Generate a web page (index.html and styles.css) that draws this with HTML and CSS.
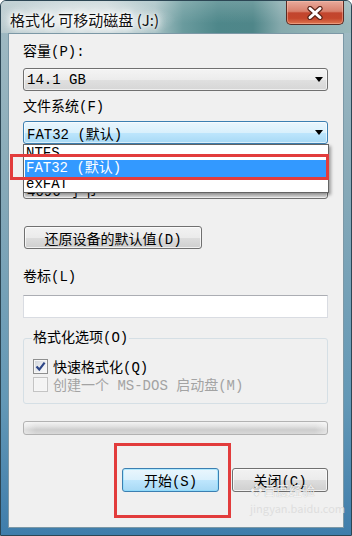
FILE: index.html
```html
<!DOCTYPE html>
<html lang="zh-CN">
<head>
    <meta charset="UTF-8">
    <meta name="viewport" content="width=device-width, initial-scale=1.0">
    <title>格式化 可移动磁盘 (J:)</title>
    <link rel="stylesheet" href="styles.css">
</head>
<body>
    <div class="window">
        <div class="titlebar">
            <span class="title">格式化 可移动磁盘 (J:)</span>
            <button class="close" title="关闭">
                <svg width="18" height="14" viewBox="0 0 18 14">
                    <path d="M4 2.5 L14 11.5 M14 2.5 L4 11.5" stroke="#5a2418" stroke-width="5.2" stroke-linecap="round" fill="none"/>
                    <path d="M4 2.5 L14 11.5 M14 2.5 L4 11.5" stroke="#fff" stroke-width="3" stroke-linecap="round" fill="none"/>
                </svg>
            </button>
        </div>
        <div class="frame">
            <div class="client">
                <div class="label">容量(P):</div>
                <div class="combo">
                    <span>14.1 GB</span>
                    <svg class="arrow" width="8" height="5" viewBox="0 0 8 5"><path d="M0 0h8L4 5z"/></svg>
                </div>

                <div class="label label-gap">文件系统(F)</div>
                <div class="combo-wrap">
                    <div class="combo combo-hot">
                        <span>FAT32 (默认)</span>
                        <svg class="arrow" width="8" height="5" viewBox="0 0 8 5"><path d="M0 0h8L4 5z"/></svg>
                    </div>
                    <div class="dropdown">
                        <div class="item item-first">NTFS</div>
                        <div class="item item-selected">FAT32 (默认)</div>
                        <div class="item item-last">exFAT</div>
                        <div class="mark mark-row"></div>
                    </div>
                </div>

                <!-- covered by the open list -->
                <div class="label label-gap label-covered">分配单元大小(A)</div>
                <div class="combo combo-low">
                    <span>4096 字节</span>
                    <svg class="arrow" width="8" height="5" viewBox="0 0 8 5"><path d="M0 0h8L4 5z"/></svg>
                </div>

                <button class="btn btn-restore">还原设备的默认值(D)</button>

                <div class="label label-volume">卷标(L)</div>
                <div class="textbox"></div>

                <fieldset class="group">
                    <legend>格式化选项(O)</legend>
                    <label class="row">
                        <span class="check">
                            <svg width="11" height="11" viewBox="0 0 11 11"><path d="M1.5 5.5 L4.3 8.6 L9.6 1.6" stroke="#2d4687" stroke-width="2.2" fill="none"/></svg>
                        </span>
                        快速格式化(Q)
                    </label>
                    <label class="row row-disabled">
                        <span class="check check-disabled"></span>
                        创建一个 MS-DOS 启动盘(M)
                    </label>
                </fieldset>

                <div class="progress"></div>

                <div class="actions">
                    <span class="mark-wrap">
                        <button class="btn btn-default">开始(S)</button>
                        <span class="mark mark-start"></span>
                    </span>
                    <button class="btn btn-close">关闭(C)</button>
                </div>

                <div class="watermark">
                    <div class="wm-logo">&#10070;百度经验</div>
                    <div class="wm-url">jingyan.baidu.com</div>
                </div>
            </div>
        </div>
    </div>
</body>
</html>
```

FILE: styles.css
```css
* {
    box-sizing: border-box;
}
body {
    margin: 0;
    width: 352px;
    height: 536px;
    overflow: hidden;
    font-family: "Liberation Mono", "Noto Sans CJK SC", monospace;
    font-size: 14px;
    color: #000;
}
.window {
    width: 352px;
    height: 536px;
    display: flex;
    flex-direction: column;
    border: 1px solid #2c4654;
    border-radius: 6px 6px 0 0;
    overflow: hidden;
    background: linear-gradient(180deg, #a3bcc4 0%, #86a9b8 35%, #6398b6 75%, #3f7dab 100%);
}
.titlebar {
    height: 32px;
    display: flex;
    align-items: flex-start;
    padding: 0 7px 0 9px;
    background:
        radial-gradient(ellipse 95px 22px at 80px 19px, rgba(255, 255, 255, 0.75), rgba(255, 255, 255, 0) 100%),
        linear-gradient(180deg, rgba(255, 255, 255, 0.18), rgba(255, 255, 255, 0) 70%),
        linear-gradient(90deg, #b6c8cc 0%, #c3d2d5 30%, #a8c2c5 44%, #6a9b9e 52%, #4e878a 62%, #4f8689 72%, #86aaad 80%, #9ab8bb 100%);
}
.title {
    margin-top: 9px;
    line-height: 20px;
    font-family: "Noto Sans CJK SC", sans-serif;
    font-size: 15px;
    color: #111;
    text-shadow: 0 0 10px #fff, 0 0 10px #fff, 0 0 6px #fff, 0 0 3px #fff;
}
.close {
    margin-left: auto;
    width: 58px;
    height: 24px;
    padding: 0;
    display: flex;
    align-items: center;
    justify-content: center;
    border: 1px solid #5b2a22;
    border-top: none;
    border-radius: 0 0 5px 5px;
    background: linear-gradient(180deg, #e8aa9c 0%, #d8806c 45%, #c2452e 52%, #c4462c 75%, #df7650 100%);
    box-shadow: inset 0 0 0 1px rgba(255, 200, 180, 0.45);
}
.frame {
    flex: 1;
    display: flex;
    padding: 0 7px 7px;
}
.client {
    flex: 1;
    position: relative;
    display: flex;
    flex-direction: column;
    padding: 10px 15px 0 14px;
    background: #f0f0f0;
    border: 1px solid #7c98a6;
}
.label {
    height: 16px;
    line-height: 16px;
    white-space: nowrap;
}
.label-gap {
    margin-top: 8px;
}
.label-covered {
    visibility: hidden;
}
.combo {
    margin-top: 8px;
    height: 23px;
    display: flex;
    align-items: center;
    justify-content: space-between;
    padding: 0 4px 0 3px;
    border: 1px solid #707070;
    border-radius: 3px;
    background: linear-gradient(180deg, #f4f4f4 0%, #ececec 50%, #e0e0e0 51%, #d6d6d6 100%);
    box-shadow: inset 0 0 0 1px rgba(255, 255, 255, 0.6);
    white-space: nowrap;
}
.combo-wrap {
    position: relative;
    margin-top: 6px;
}
.combo-wrap .combo {
    margin-top: 0;
}
.combo-hot {
    border-color: #3c7fb1;
    background: linear-gradient(180deg, #eaf6fd 0%, #d9f0fc 50%, #bee6fd 51%, #a7d9f5 100%);
}
.combo-low span {
    padding-top: 5px;
}
.arrow {
    fill: #000;
}
.dropdown {
    position: absolute;
    top: 100%;
    left: 0;
    width: 306px;
    height: 49px;
    z-index: 2;
    background: #fff;
    border: 1px solid #646464;
    box-shadow: 2px 2px 3px rgba(0, 0, 0, 0.35);
}
.item {
    height: 16px;
    line-height: 16px;
    padding-left: 2px;
    overflow: hidden;
    white-space: nowrap;
}
.item-first {
    height: 15px;
    line-height: 15px;
    padding-top: 1px;
}
.item-selected {
    height: 17px;
    line-height: 17px;
    margin: 0 1px;
    padding-left: 1px;
    background: #3399ff;
    color: #fff;
}
.item-last {
    height: 15px;
    line-height: 14px;
}
.mark {
    position: absolute;
    border: 3px solid #e23c3c;
    pointer-events: none;
}
.mark-row {
    left: -14px;
    right: -1px;
    top: 9px;
    height: 26px;
}
.btn {
    padding: 0;
    font: inherit;
    color: #000;
    border: 1px solid #707070;
    border-radius: 3px;
    background: linear-gradient(180deg, #f2f2f2 0%, #ebebeb 50%, #dddddd 51%, #cfcfcf 100%);
    box-shadow: inset 0 0 0 1px rgba(255, 255, 255, 0.7);
    white-space: nowrap;
}
.btn-restore {
    align-self: flex-start;
    margin: 27px 0 0 1px;
    width: 178px;
    height: 23px;
}
.label-volume {
    margin-top: 20px;
}
.textbox {
    margin-top: 10px;
    height: 23px;
    background: #fff;
    border: 1px solid #d9dce2;
    border-top-color: #abadb3;
}
.group {
    margin: 12px 0 0;
    padding: 11px 10px 10px 8px;
    min-inline-size: 0;
    border: 1px solid #d5dfe5;
    border-radius: 3px;
}
.group legend {
    padding: 0 1px;
    height: 16px;
    line-height: 16px;
}
.row {
    height: 18px;
    display: flex;
    align-items: center;
    gap: 5px;
    padding-left: 1px;
    white-space: nowrap;
}
.row-disabled {
    color: #a3a3a3;
}
.check {
    width: 15px;
    height: 15px;
    display: flex;
    align-items: center;
    justify-content: center;
    border: 1px solid #8e8f8f;
    background: linear-gradient(135deg, #cfd3d9 0%, #eef0f3 60%, #fafafa 100%);
    box-shadow: inset 0 0 0 1px #f6f6f6;
}
.check-disabled {
    border-color: #c4c4c4;
    background: #f4f4f4;
}
.progress {
    margin-top: 17px;
    height: 14px;
    border: 1px solid #b2b2b2;
    border-radius: 3px;
    background:
        linear-gradient(90deg, rgba(255, 255, 255, 0.4) 0, rgba(255, 255, 255, 0) 12px, rgba(255, 255, 255, 0) calc(100% - 12px), rgba(255, 255, 255, 0.4) 100%),
        linear-gradient(180deg, #f3f3f3 0%, #e2e2e2 35%, #cdcdcd 65%, #d9d9d9 100%);
}
.actions {
    margin-top: 33px;
    display: flex;
    justify-content: flex-end;
    gap: 13px;
}
.actions .btn {
    height: 24px;
}
.mark-wrap {
    position: relative;
    display: flex;
}
.btn-default {
    width: 97px;
    border-color: #3c7fb1;
    background: linear-gradient(180deg, #eaf6fd 0%, #d9f0fc 50%, #bee6fd 51%, #a7d9f5 100%);
    box-shadow: inset 0 0 0 1px rgba(120, 220, 255, 0.5);
}
.mark-start {
    top: -25px;
    bottom: -26px;
    left: -8px;
    right: -12px;
}
.btn-close {
    width: 96px;
}
.watermark {
    position: absolute;
    left: 241px;
    top: 450px;
    font-family: "Noto Sans CJK SC", sans-serif;
    pointer-events: none;
}
.wm-logo {
    font-size: 13px;
    line-height: 12px;
    color: rgba(255, 255, 255, 0.85);
    text-shadow: 0 0 1px rgba(0, 0, 0, 0.3);
}
.wm-url {
    margin-top: 7px;
    font-size: 11px;
    line-height: 11px;
    color: #dedede;
}
```
